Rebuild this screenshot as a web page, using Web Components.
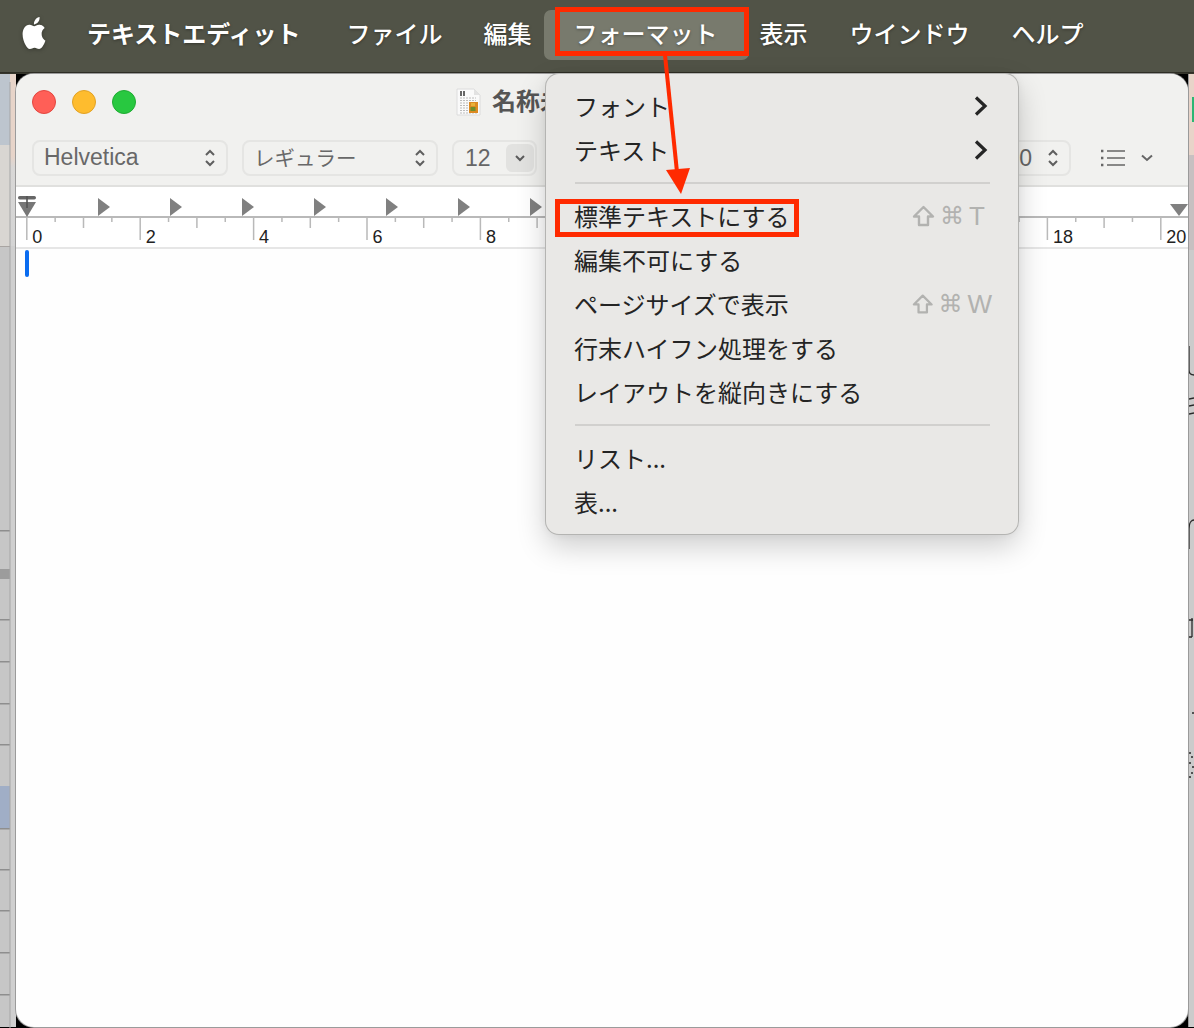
<!DOCTYPE html>
<html lang="ja">
<head>
<meta charset="utf-8">
<title>テキストエディット</title>
<style>
    html, body { margin: 0; padding: 0; background: #c5c5c5; }
    body {
        font-family: "Noto Sans CJK JP", "Liberation Sans", sans-serif;
    }
</style>
</head>
<body>

<mac-desktop>
    <mac-menubar>
        <span slot="app">テキストエディット</span>
        <menu-title style="margin-right:-1px">ファイル</menu-title>
        <menu-title>編集</menu-title>
        <menu-title active>フォーマット</menu-title>
        <menu-title>表示</menu-title>
        <menu-title>ウインドウ</menu-title>
        <menu-title>ヘルプ</menu-title>
    </mac-menubar>

    <desk-area>
        <mac-window>
            <span slot="title">名称未</span>
            <tool-select style="width:196px">Helvetica</tool-select>
            <tool-select style="width:196px" kana>レギュラー</tool-select>
            <tool-combo>12</tool-combo>
        </mac-window>
    </desk-area>

    <format-menu>
        <menu-row submenu>フォント</menu-row>
        <menu-row submenu>テキスト</menu-row>
        <menu-sep></menu-sep>
        <menu-row keys="T">標準テキストにする</menu-row>
        <menu-row>編集不可にする</menu-row>
        <menu-row keys="W">ページサイズで表示</menu-row>
        <menu-row>行末ハイフン処理をする</menu-row>
        <menu-row>レイアウトを縦向きにする</menu-row>
        <menu-sep></menu-sep>
        <menu-row>リスト...</menu-row>
        <menu-row>表...</menu-row>
    </format-menu>

    <red-box style="left:555px;top:7px;width:194px;height:49px"></red-box>
    <red-box style="left:555px;top:199px;width:244px;height:38px"></red-box>
    <red-arrow></red-arrow>
</mac-desktop>

<script>
function define(name, css, html, init) {
    customElements.define(name, class extends HTMLElement {
        constructor() {
            super();
            this.attachShadow({mode: "open"});
            this.shadowRoot.innerHTML = `<style>${css}</style>${html}`;
        }
        connectedCallback() {
            if (init) {
                init(this, this.shadowRoot);
            }
        }
    });
}

const CJK = `"Noto Sans CJK JP", "Liberation Sans", sans-serif`;

define("mac-desktop", `
    :host {
        display: flex;
        flex-direction: column;
        position: relative;
        width: 1194px;
        height: 1028px;
        overflow: hidden;
        background: #c5c5c5;
    }
`, `<slot></slot>`);

const APPLE = "M12.152 6.896c-.948 0-2.415-1.078-3.96-1.04-2.04.027-3.91 1.183-4.961 3.014-2.117 3.675-.546 9.103 1.519 12.09 1.013 1.454 2.208 3.09 3.792 3.039 1.52-.065 2.09-.987 3.935-.987 1.831 0 2.35.987 3.96.948 1.637-.026 2.676-1.48 3.676-2.948 1.156-1.688 1.636-3.325 1.662-3.415-.039-.013-3.182-1.221-3.22-4.857-.026-3.04 2.48-4.494 2.597-4.559-1.429-2.09-3.623-2.324-4.39-2.376-2-.156-3.675 1.09-4.61 1.09zM15.53 3.83c.843-1.012 1.4-2.427 1.245-3.83-1.207.052-2.662.805-3.532 1.818-.78.896-1.454 2.338-1.273 3.714 1.338.104 2.715-.688 3.559-1.701";

define("mac-menubar", `
    :host {
        display: flex;
        align-items: center;
        flex: 0 0 72px;
        height: 72px;
        padding-left: 20px;
        padding-bottom: 4px;
        box-sizing: border-box;
        background: #515347;
        color: #fff;
        font: 500 24px ${CJK};
        text-shadow: 0 1px 3px rgba(0, 0, 0, .35);
    }
    svg { width: 28px; height: 32px; margin-right: 39px; margin-top: -3px; filter: drop-shadow(0 1px 2px rgba(0,0,0,.3)); }
    .app { font-weight: 700; margin-right: 46px; margin-top: -3px; line-height: 34px; white-space: nowrap; }
    .items { display: flex; gap: 42px; }
`, `
    <svg viewBox="0 0 24 24" preserveAspectRatio="none"><path fill="#fff" d="${APPLE}"/></svg>
    <div class="app"><slot name="app"></slot></div>
    <div class="items"><slot></slot></div>
`);

define("menu-title", `
    :host {
        display: block;
        position: relative;
        white-space: nowrap;
        line-height: 34px;
        margin-top: -2px;
    }
    :host([active])::before {
        content: "";
        position: absolute;
        left: -30px;
        right: -31px;
        top: -6px;
        bottom: -10px;
        border-radius: 7px;
        background: #787a6d;
        z-index: 0;
    }
    span { position: relative; }
`, `<span><slot></slot></span>`);

define("desk-area", `
    :host {
        display: flex;
        flex: 1;
        min-height: 0;
        padding-top: 2px;
        padding-bottom: 1px;
        background:
            linear-gradient(#2b2a22, #3a3a30) top / 100% 2px no-repeat,
            #000;
    }
    .left {
        flex: 0 0 16px;
        background:
            linear-gradient(#e7d4c9 0 82px, #d8d7d6 94px, #d4d4d4 172px, #cfcfcf 172px) 10px 0 / 6px 100% no-repeat,
            linear-gradient(#bdc5ce 0 71px, #d9d6d2 71px 172px, #c6c6c6 172px) 0 0 / 10px 100% no-repeat;
    }
    .strip {
        display: block;
        width: 11px;
        height: 954px;
    }
    .right {
        flex: 0 0 6px;
        background: linear-gradient(#e8d4c9 0 81px, #c7c0c1 81px 176px, #cbcbcb 176px);
        border-left: 1px solid #9a9a9a;
        box-sizing: border-box;
    }
    .right svg { display: block; width: 5px; height: 954px; }
`, `
    <div class="left"><svg class="strip" viewBox="0 0 11 954">
        <g fill="#8e8e8e">
            <rect y="456" width="10" height="1.500"/><rect y="545" width="10" height="1.500"/>
            <rect y="587" width="10" height="1.500"/><rect y="629" width="10" height="1.500"/>
            <rect y="670" width="10" height="1.500"/>
            <rect y="754" width="10" height="1.500"/><rect y="795" width="10" height="1.500"/>
            <rect y="836" width="10" height="1.500"/><rect y="878" width="10" height="1.500"/>
            <rect y="920" width="10" height="1.500"/>
        </g>
        <rect y="172" width="10" height="1" fill="#a9a5a2"/>
        <rect y="495" width="10" height="10" fill="#9c9c9c"/>
        <rect y="712" width="10" height="42" fill="#a0aec6"/>
        <rect x="9.500" y="8" width="1" height="946" fill="#a5a5a5"/>
    </svg></div>
    <slot></slot>
    <div class="right"><svg viewBox="0 0 5 954" fill="none" stroke="#2a2a2a" stroke-width="1.300">
        <rect x="3" y="23" width="2" height="25" fill="#2bb673" stroke="none"/>
        <path d="M0 272v24c0 4 2 5 5 5M0 325l5-1M0 332l5-1M0 340l5-1M0 475v-20c0-7 3-9 5-9M0 546h4M3 544v19M0 563h3"/>
        <path d="M4 638v2M1 678v2M3 682v2M1 688v2M4 692v2M3 698v2M1 702v2" stroke-width="1.500"/>
    </svg></div>
`);

define("mac-window", `
    :host {
        display: flex;
        flex-direction: column;
        flex: 1;
        min-width: 0;
        border-radius: 18px;
        overflow: hidden;
        background: #fefefe;
        box-shadow: 0 0 0 1px #9b9b9b;
    }
    .head {
        flex: 0 0 113px;
        display: flex;
        flex-direction: column;
        box-sizing: border-box;
        background: #f1f1ef;
        border-bottom: 2px solid #e0e0de;
        padding-top: 16px;
        height: 113px;
    }
    .titlebar {
        display: flex;
        align-items: center;
        height: 24px;
        padding-left: 16px;
    }
    .lights { display: flex; gap: 16px; }
    .lights i { display: block; width: 24px; height: 24px; border-radius: 50%; box-sizing: border-box; }
    .lights i:nth-child(1) { background: #ff5f57; border: 1px solid #e2463f; }
    .lights i:nth-child(2) { background: #febc2e; border: 1px solid #e1a124; }
    .lights i:nth-child(3) { background: #28c840; border: 1px solid #1fab32; }
    .doc { margin-left: 320px; width: 25px; height: 28px; flex: none; }
    .title {
        margin-left: 11px;
        margin-top: -5px;
        font: 700 24px ${CJK};
        color: #555;
        white-space: nowrap;
    }
    .tools {
        display: flex;
        align-items: center;
        margin-top: 26px;
        height: 36px;
        padding-left: 16px;
        gap: 14px;
    }
    .spacer { flex: 1; }
    .spacing {
        display: flex;
        align-items: center;
        justify-content: flex-end;
        width: 90px;
        height: 36px;
        box-sizing: border-box;
        border: 2px solid #e5e5e3;
        border-radius: 8px;
        color: #666;
        font: 23px "Liberation Sans", sans-serif;
        padding-right: 10px;
        gap: 15px;
    }
    .list { margin-left: 16px; margin-right: 35px; display: flex; align-items: center; gap: 16px; }
`, `
    <div class="head">
        <div class="titlebar">
            <div class="lights"><i></i><i></i><i></i></div>
            <svg class="doc" viewBox="0 0 25 28">
                <path d="M1 1h17l6 6v20H1z" fill="#fafafa" stroke="#dcdcdc"/>
                <path d="M18 1v6h6z" fill="#e2e2e2"/>
                <path d="M4 3h2v5H4zM7 3h2v5H7z" fill="#666"/>
                <path d="M4 10h16M4 12.500h16M4 15h8M4 17.500h8M4 20h8M4 22.500h8M4 25h17" stroke="#bcbcbc" stroke-width="1.200" stroke-dasharray="2 1"/>
                <rect x="13" y="14" width="9" height="11" fill="#dd8a22"/>
                <rect x="14.500" y="19" width="5" height="4" fill="#6f8e2c"/>
                <rect x="15" y="15" width="4" height="3" fill="#e8b13a"/>
            </svg>
            <div class="title"><slot name="title"></slot></div>
        </div>
        <div class="tools">
            <slot></slot>
            <div class="spacer"></div>
            <div class="spacing"><span>.0</span><svg width="12" height="18" viewBox="0 0 12 18" fill="none" stroke="#5f5f5f" stroke-width="2"><path d="M2 6l4-4 4 4M2 12l4 4 4-4"/></svg></div>
            <div class="list">
                <svg width="24" height="18" viewBox="0 0 24 18" fill="none" stroke="#666"><path stroke-width="1.600" d="M6 2h18M6 9h18M6 16h18"/><path stroke-width="2.400" d="M0 2h2.400M0 9h2.400M0 16h2.400"/></svg>
                <svg width="12" height="8" viewBox="0 0 12 8" fill="none" stroke="#666" stroke-width="2"><path d="M1 1.500l5 4.500 5-4.500"/></svg>
            </div>
        </div>
    </div>
    <mac-ruler></mac-ruler>
    <div style="flex:1;padding:1px 0 0 8.500px"><div style="width:4px;height:27px;border-radius:2px;background:#0a6cf0"></div></div>
`);

define("tool-select", `
    :host {
        display: flex;
        align-items: center;
        justify-content: space-between;
        flex: none;
        height: 36px;
        box-sizing: border-box;
        border: 2px solid #e5e5e3;
        border-radius: 8px;
        padding: 0 10px 0 10px;
        color: #686868;
        font: 23px "Liberation Sans", ${CJK};
    }
    :host([kana]) { font-size: 20.500px; font-family: ${CJK}; }
    .label { margin-top: -2px; white-space: nowrap; }
`, `
    <span class="label"><slot></slot></span>
    <svg width="12" height="18" viewBox="0 0 12 18" fill="none" stroke="#5f5f5f" stroke-width="2"><path d="M2 6l4-4 4 4M2 12l4 4 4-4"/></svg>
`);

define("tool-combo", `
    :host {
        display: flex;
        align-items: center;
        justify-content: space-between;
        flex: none;
        width: 85px;
        height: 36px;
        box-sizing: border-box;
        border: 2px solid #e5e5e3;
        border-radius: 8px;
        padding: 0 1px 0 11px;
        color: #666;
        font: 23px "Liberation Sans", sans-serif;
    }
    .btn {
        display: flex;
        align-items: center;
        justify-content: center;
        width: 28px;
        height: 28px;
        border-radius: 6px;
        background: #e2e2e0;
    }
`, `
    <span><slot></slot></span>
    <div class="btn"><svg width="10" height="7" viewBox="0 0 10 7" fill="none" stroke="#5c5c5c" stroke-width="2"><path d="M1 1l4 4 4-4"/></svg></div>
`);

// ruler: 56.7px per unit; long tick every 2, medium every 1, short every half
define("mac-ruler", `
    :host {
        display: block;
        flex: 0 0 62px;
        height: 62px;
        background: #fff;
        border-bottom: 2px solid #e6e6e6;
        box-sizing: border-box;
    }
    svg { display: block; width: 1172px; height: 60px; }
    text { font: 18px "Liberation Sans", sans-serif; fill: #222; }
`, `<svg viewBox="0 0 1172 60"></svg>`, (el, root) => {
    const x0 = 10.8;          // tick for 0, window starts at x=16
    const unit = 56.7;
    let s = `<rect x="0" y="29" width="1172" height="2" fill="#b9b9b9"/>`;
    for (let i = 0; x0 + i * unit / 2 < 1172; i++) {
        const x = x0 + i * unit / 2;
        const h = i % 4 === 0 ? 23 : i % 2 === 0 ? 11 : 5;
        s += `<rect x="${x - .75}" y="30" width="1.500" height="${h}" fill="#b9b9b9"/>`;
        const n = i / 2;
        // 10..16 sit under the open menu
        if (i % 4 === 0 && (n < 10 || n > 16)) {
            s += `<text x="${x + 5.500}" y="56">${n}</text>`;
        }
    }
    for (let i = 0; i < 7; i++) {
        const x = 82 + i * 72;
        s += `<path d="M${x} 11l12 9-12 9z" fill="#808080"/>`;
    }
    s += `<path d="M2 15h18l-9 15z" fill="#777"/>`;
    s += `<rect x="2" y="9" width="18" height="3.500" rx="1.700" fill="#666"/><rect x="10.200" y="9" width="1.600" height="12" fill="#555"/>`;
    s += `<path d="M1154 17h18l-9 12z" fill="#808080"/>`;
    root.querySelector("svg").innerHTML = s;
});

define("format-menu", `
    :host {
        display: block;
        position: absolute;
        left: 546px;
        top: 74px;
        width: 472px;
        height: 460px;
        box-sizing: border-box;
        padding: 10px 0;
        border-radius: 13px;
        background: #e9e8e6;
        box-shadow: 0 0 0 1px #b4b4b2, 0 12px 30px rgba(0, 0, 0, .2), 0 0 10px rgba(0, 0, 0, .06);
        color: #242424;
        font: 400 24px ${CJK};
    }
`, `<slot></slot>`);

const SHIFT = `<svg width="23" height="22" viewBox="0 0 23 22" fill="none" stroke="#b2b2b0" stroke-width="2.400" stroke-linejoin="round"><path d="M11.500 2L21 11.500h-5V20H7v-8.500H2z"/></svg>`;

define("menu-row", `
    :host {
        display: flex;
        align-items: center;
        height: 44px;
        padding: 0 30px 0 28px;
        box-sizing: border-box;
        white-space: nowrap;
    }
    .label { flex: 1; margin-top: -1px; }
    .chev { display: none; }
    :host([submenu]) .chev { display: block; }
    .keys {
        display: flex;
        align-items: center;
        width: 80px;
        margin-right: -4px;
        gap: 5px;
        color: #b2b2b0;
        font: 26px "Liberation Sans", sans-serif;
    }
    .cmd { font: 24px "DejaVu Sans", sans-serif; }
    .keys[hidden] { display: none; }
`, `
    <span class="label"><slot></slot></span>
    <div class="keys" hidden>${SHIFT}<span class="cmd">⌘</span><span class="key"></span></div>
    <svg class="chev" width="14" height="20" viewBox="0 0 14 20" fill="none" stroke="#252525" stroke-width="3.200"><path d="M2 1.500l9 8.500-9 8.500"/></svg>
`, (el, root) => {
    if (el.hasAttribute("keys")) {
        root.querySelector(".keys").hidden = false;
        root.querySelector(".key").textContent = el.getAttribute("keys");
    }
});

define("menu-sep", `
    :host {
        display: block;
        height: 2px;
        margin: 10px 28px 10px 29px;
        background: #d1d0ce;
    }
`, ``);

define("red-box", `
    :host {
        display: block;
        position: absolute;
        box-sizing: border-box;
        border: 5px solid #ff2a00;
    }
`, ``);

define("red-arrow", `
    :host {
        display: block;
        position: absolute;
        left: 655px;
        top: 50px;
        width: 40px;
        height: 150px;
    }
    svg { display: block; }
`, `
    <svg width="40" height="150" viewBox="0 0 40 150">
        <path d="M10 5L22 122" stroke="#ff2a00" stroke-width="4" fill="none"/>
        <path d="M11 120L35 118L26 144z" fill="#ff2a00"/>
    </svg>
`);
</script>
</body>
</html>
